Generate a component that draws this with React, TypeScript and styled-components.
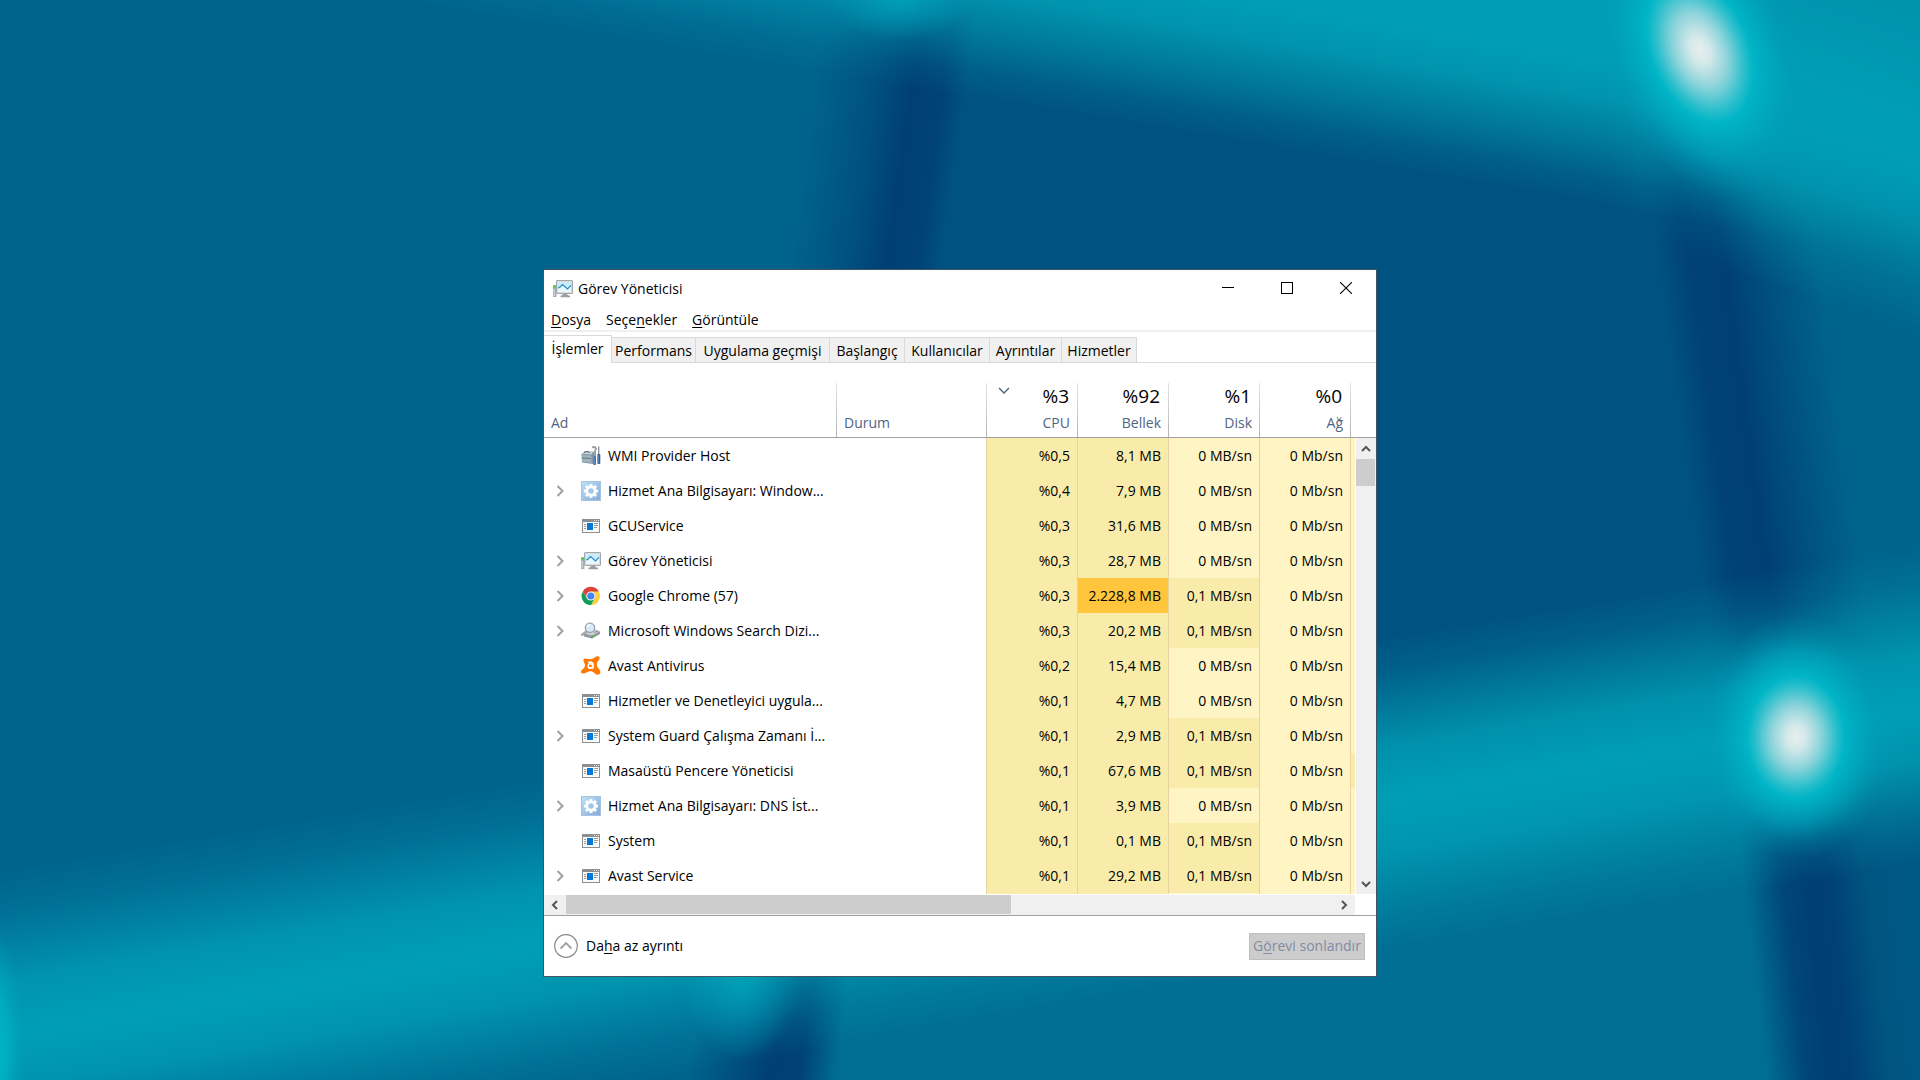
import React from "react";
import styled, { createGlobalStyle } from "styled-components";

const GlobalStyle = createGlobalStyle`
  *, *::before, *::after { box-sizing: border-box; }
  body {
    margin: 0;
    background: #00638e;
    font-family: "Open Sans", "Noto Sans", sans-serif;
    font-size: 14px;
    line-height: 20px;
    color: #000;
  }
  button { font: inherit; color: inherit; border: 0; background: none; padding: 0; margin: 0; }
  svg { display: block; flex: none; }
`;

const Desktop = styled.div`
  display: grid;
  min-height: 100vh;
  overflow: hidden;
`;

const Wallpaper = styled.svg`
  grid-area: 1 / 1;
  width: 100%;
  height: 100%;
`;

const WindowSlot = styled.main`
  grid-area: 1 / 1;
  display: flex;
  justify-content: center;
  align-items: flex-start;
  padding: 269px 16px 32px;
`;

const Window = styled.section`
  width: 834px;
  max-width: 100%;
  background: #fff;
  border: 1px solid #42545e;
`;

const TitleBar = styled.header`
  display: flex;
  align-items: center;
  height: 38px;
  padding: 0 1px 0 9px;
`;

const Title = styled.h1`
  flex: 1;
  margin: 0 0 0 5px;
  font-size: 14px;
  line-height: 20px;
  font-weight: 400;
`;

const CaptionButton = styled.button`
  display: flex;
  align-items: center;
  justify-content: center;
  width: 59px;
  height: 36px;
  align-self: flex-start;
`;

const MenuBar = styled.nav`
  display: flex;
  gap: 15px;
  height: 24px;
  padding-left: 7px;
  border-bottom: 2px solid #f0f0f0;
`;

const MenuItem = styled.button`
  padding-top: 2px;
`;

const Key = styled.span`
  text-decoration: underline;
  text-underline-offset: 2px;
`;

const TabStrip = styled.div`
  display: flex;
  align-items: flex-end;
  height: 31px;
  border-bottom: 1px solid #d9d9d9;
`;

const Tab = styled.button<{ $width: number; $active?: boolean }>`
  width: ${(p) => p.$width}px;
  height: ${(p) => (p.$active ? 28 : 25)}px;
  margin-bottom: ${(p) => (p.$active ? -1 : 0)}px;
  padding: ${(p) => (p.$active ? "0 0 2px" : "2px 0 0")};
  border: solid #d9d9d9;
  border-width: 1px 1px 0 0;
  background: ${(p) => (p.$active ? "#fff" : "#f0f0f0")};
  white-space: nowrap;
`;

const Panel = styled.div`
  display: grid;
  grid-template-columns: minmax(0, 1fr) 21px;
  padding-top: 20px;
`;

const ProcessTable = styled.table`
  width: 100%;
  table-layout: fixed;
  border-collapse: separate;
  border-spacing: 0;
`;

const Col = styled.col<{ $width?: number }>`
  width: ${(p) => (p.$width ? `${p.$width}px` : "auto")};
`;

const HeadCell = styled.th<{ $line?: boolean }>`
  height: 55px;
  padding: 0;
  border-bottom: 1px solid #a0a0a0;
  background: ${(p) =>
    p.$line ? "linear-gradient(#e4e4e4, #b4b4b4) right / 1px 100% no-repeat" : "none"};
  font-weight: 400;
`;

const HeadButton = styled.button<{ $end?: boolean }>`
  display: flex;
  flex-direction: column;
  justify-content: flex-end;
  gap: 5px;
  width: 100%;
  height: 54px;
  padding: 0 8px 4px 7px;
  color: #4f6482;
  text-align: ${(p) => (p.$end ? "right" : "left")};
`;

const HeadTop = styled.span`
  display: flex;
  justify-content: space-between;
  width: 100%;
  padding: 0 1px 0 4px;
`;

const HeadLabel = styled.span`
  width: 100%;
`;

const Usage = styled.span`
  flex: 1;
  font-size: 19px;
  line-height: 24px;
  color: #000;
`;

const SortMark = styled.svg`
  margin-top: 3px;
`;

const Row = styled.tr`
  height: 35px;
`;

const NameCell = styled.th`
  padding: 0;
  font-weight: 400;
  text-align: left;
`;

const NameBody = styled.div`
  display: flex;
  align-items: center;
  height: 35px;
  padding-left: 10px;
`;

const Expander = styled.button`
  display: flex;
  align-items: center;
  justify-content: center;
  flex: none;
  width: 12px;
  height: 20px;
  margin-right: 15px;
`;

const ExpanderSpace = styled.span`
  flex: none;
  width: 27px;
`;

const NameText = styled.span`
  margin-left: 7px;
  white-space: nowrap;
`;

const StatusCell = styled.td`
  padding: 0;
  border-right: 1px solid #e8d3a0;
`;

const heat = ["#fff4c4", "#f9ecaa", "#ffc63d"];

const HeatCell = styled.td<{ $heat: number }>`
  padding: 0 7px 0 0;
  background: ${(p) => heat[p.$heat]};
  background-clip: padding-box;
  border-right: 1px solid #e8d3a0;
  text-align: right;
  white-space: nowrap;
`;

const EdgeCell = styled.td<{ $heat: number }>`
  padding: 0;
  background: ${(p) => heat[p.$heat]};
`;

const CutRow = styled.tr`
  height: 1px;
`;

const CutCell = styled.td`
  padding: 0;
`;

const SideColumn = styled.div`
  display: flex;
  flex-direction: column;
`;

const HeadFiller = styled.div`
  height: 55px;
  border-bottom: 1px solid #a0a0a0;
`;

const VerticalBar = styled.div`
  flex: 1;
  display: flex;
  flex-direction: column;
  margin-left: 1px;
  background: #f0f0f0;
`;

const ArrowButton = styled.button`
  display: flex;
  align-items: center;
  justify-content: center;
  flex: none;
  width: 19px;
  height: 21px;
`;

const VerticalTrack = styled.div`
  flex: 1;
`;

const VerticalThumb = styled.div`
  width: 19px;
  height: 27px;
  background: #cdcdcd;
`;

const HorizontalBar = styled.div`
  display: flex;
  align-items: flex-start;
  height: 20px;
  margin: 1px 21px 0 0;
  background: #f0f0f0;
`;

const HorizontalTrack = styled.div`
  flex: 1;
`;

const HorizontalThumb = styled.div`
  width: 58%;
  height: 19px;
  background: #cdcdcd;
`;

const SideArrow = styled(ArrowButton)`
  width: 22px;
  height: 19px;
`;

const Footer = styled.footer`
  display: flex;
  align-items: center;
  justify-content: space-between;
  height: 61px;
  padding: 0 11px 0 10px;
  border-top: 1px solid #a0a0a0;
`;

const DetailsButton = styled.button`
  display: flex;
  align-items: center;
  gap: 8px;
`;

const EndTask = styled.button`
  width: 116px;
  height: 27px;
  border: 1px solid #bfbfbf;
  background: #cccccc;
  color: #838ba3;
  white-space: nowrap;
`;

type IconKind = "tools" | "gear" | "app" | "monitor" | "chrome" | "search" | "avast";

function MonitorIcon() {
  return (
    <svg width="20" height="20" viewBox="0 0 20 20" aria-hidden="true">
      <rect x="0" y="6" width="3.4" height="12" fill="#a9adb0" />
      <rect x="0.6" y="6.6" width="2.2" height="2.6" fill="#4fd13b" />
      <rect x="0.6" y="10" width="1.2" height="7" fill="#d4d6d8" />
      <path d="M10 15h4l1 1.500h2V18.300H7.500V16.500H9z" fill="#9a9ea1" />
      <rect x="3.500" y="1.500" width="16" height="13" rx="0.5" fill="#d9dbdc" stroke="#a4a7a9" />
      <rect x="5" y="3" width="13" height="10" fill="#c8ecfb" />
      <path d="M5 9l2-1.500 3-3.200 4.500 4.800L18 5.500V13H5z" fill="#e8f8fe" />
      <path d="M5 9l1.500-.5 3.200-3L14.500 10 18 6.300" fill="none" stroke="#1c86c4" strokeWidth="1.100" />
    </svg>
  );
}

function GearIcon() {
  return (
    <svg width="20" height="20" viewBox="0 0 20 20" aria-hidden="true">
      <defs>
        <linearGradient id="gearFill" x1="0" y1="0" x2="1" y2="1">
          <stop offset="0" stopColor="#b9e2f6" />
          <stop offset="1" stopColor="#86a9dc" />
        </linearGradient>
      </defs>
      <rect x="0.5" y="0.5" width="19" height="19" fill="url(#gearFill)" stroke="#a9c3dc" />
      <g fill="#fff">
        {[0, 45, 90, 135].map((a) => (
          <rect key={a} x="8.500" y="2.900" width="3" height="14.200" rx="0.6" transform={`rotate(${a} 10 10)`} />
        ))}
        <circle cx="10" cy="10" r="5.400" />
      </g>
      <circle cx="10" cy="10" r="2.800" fill="#a2c6ea" />
    </svg>
  );
}

function AppIcon() {
  return (
    <svg width="20" height="20" viewBox="0 0 20 20" aria-hidden="true">
      <rect x="1.500" y="3.500" width="17" height="13" fill="#fafafa" stroke="#8c9093" />
      <rect x="1" y="3" width="18" height="3" fill="#8c9093" />
      <path d="M13 4.500h1M15 4.500h1M17 4.500h1" stroke="#e8e8e8" />
      <rect x="6" y="7" width="6" height="7" fill="#0078d7" />
      <path d="M3 8.500h2M3 10.500h2M3 12.500h2M13 7.500h4M13 9.500h4M13 11.500h3" stroke="#9a9a9a" />
    </svg>
  );
}

function ChromeIcon() {
  return (
    <svg width="20" height="20" viewBox="0 0 20 20" aria-hidden="true">
      <circle cx="9.800" cy="10" r="9.200" fill="#fff" />
      <path d="M9.800 10L1.830 5.400A9.200 9.200 0 0 1 17.770 5.400z" fill="#db4437" />
      <path d="M9.800 5.400H17.770A9.200 9.200 0 0 1 9.800 19.200L13.780 12.300z" fill="#ffcd40" />
      <path d="M5.820 12.300L1.830 5.400A9.200 9.200 0 0 0 9.800 19.200L13.780 12.300z" fill="#0f9d58" />
      <path d="M1.830 5.400L5.820 12.300 9.800 5.400z" fill="#db4437" />
      <circle cx="9.800" cy="10" r="4.600" fill="#f4f4f4" />
      <circle cx="9.800" cy="10" r="3.600" fill="#4285f4" />
    </svg>
  );
}

function SearchIcon() {
  return (
    <svg width="20" height="20" viewBox="0 0 20 20" aria-hidden="true">
      <path d="M3 13l10-5 6 2.500v2.500l-8 4.500-8-2z" fill="#92979b" />
      <path d="M4 12.500l9-4.500 5.500 2.500-8 4.300z" fill="#cfd2d4" />
      <path d="M13 11.500l4-1.500" stroke="#8d9194" strokeWidth="1.200" />
      <rect x="10" y="14.500" width="2" height="2" fill="#44b549" />
      <path d="M1.300 13.800l4.500-3.500" stroke="#a3a8ac" strokeWidth="2.600" strokeLinecap="round" />
      <circle cx="9" cy="6.800" r="4.700" fill="#d7e9f8" stroke="#9aa3ad" strokeWidth="1.300" />
      <path d="M6.500 5.800a3 3 0 0 1 3-2.200" fill="none" stroke="#fff" strokeWidth="1.300" />
    </svg>
  );
}

function AvastIcon() {
  return (
    <svg width="20" height="20" viewBox="0 0 20 20" aria-hidden="true">
      <path
        d="M2.600 3.600C3.400 2 5.200 2.700 7 3c2.300.3 4.500.2 6-.9C14.400.9 15.600-.1 17.300.4c1.600.6 1.700 2.400.7 3.700-1.100 1.400-2.200 2.400-2.200 4.200 0 2 .7 3 2 4.500 1.500 1.600 2.100 3.600 1 4.900-1.200 1.300-3.200 1.200-4.600 0C12.600 16.300 11.600 15 9.200 15.200c-2 .1-2.900.8-4.200 1.600-1.700.9-4 1-4.800-.3-.7-1.300.2-2.400 1.500-3.300C3.300 12 4 10.800 4 8.800 4 6.900 1.800 5.300 2.600 3.600z"
        fill="#ff7800"
      />
      <circle cx="9.400" cy="9.900" r="2.200" fill="none" stroke="#fff" strokeWidth="1.600" />
      <path d="M7.300 6.700c1.800-1 4.700-.8 4.700 1.500v4.600" fill="none" stroke="#fff" strokeWidth="1.600" />
    </svg>
  );
}

function ToolsIcon() {
  return (
    <svg width="20" height="20" viewBox="0 0 20 20" aria-hidden="true">
      <path d="M0.500 8l3-2.500h9l1.500 2v9L12 18l-11-1.500z" fill="#8397a6" />
      <path d="M0.500 8l3-2.500h9L10.500 8.500z" fill="#c3d0d8" />
      <path d="M0.700 9l9.800.5v7.300L1 15.800z" fill="#9fb2be" />
      <path d="M3.500 7c0-2 4.500-2 4.500 0" fill="none" stroke="#5c6b77" strokeWidth="1.100" />
      <path d="M1 12l9 .500" stroke="#627683" strokeWidth="1" />
      <path d="M11 1.500l2.500-.8 1.500 2-1 2.500.2 5" fill="none" stroke="#9ba1a5" strokeWidth="1.900" />
      <path d="M17.700 0.500v8" stroke="#888e94" strokeWidth="1.300" />
      <rect x="12.300" y="10" width="2.700" height="9" rx="1" fill="#3e6ca6" />
      <rect x="16.300" y="8" width="3" height="10" rx="1" fill="#355f98" />
      <path d="M17.200 9v8M13.200 11v7" stroke="#80a9d8" strokeWidth="0.700" />
    </svg>
  );
}

const icons: Record<IconKind, () => React.JSX.Element> = {
  tools: ToolsIcon,
  gear: GearIcon,
  app: AppIcon,
  monitor: MonitorIcon,
  chrome: ChromeIcon,
  search: SearchIcon,
  avast: AvastIcon,
};

const arrowPaths = {
  up: "M2 8l4-4 4 4",
  down: "M2 4l4 4 4-4",
  left: "M8 2L4 6l4 4",
  right: "M4 2l4 4-4 4",
};

function Arrow({ dir }: { dir: keyof typeof arrowPaths }) {
  return (
    <svg width="12" height="12" viewBox="0 0 12 12" aria-hidden="true">
      <path d={arrowPaths[dir]} fill="none" stroke="#555" strokeWidth="2" />
    </svg>
  );
}

function Background() {
  return (
    <Wallpaper viewBox="0 0 1920 1080" preserveAspectRatio="xMidYMid slice" aria-hidden="true">
      <defs>
        <linearGradient id="poleTop" gradientUnits="userSpaceOnUse" x1="816" y1="70" x2="966" y2="91">
          <stop offset="0" stopColor="#00638e" />
          <stop offset="0.4" stopColor="#005080" />
          <stop offset="0.64" stopColor="#003f75" />
          <stop offset="0.85" stopColor="#004377" />
          <stop offset="1" stopColor="#005281" />
        </linearGradient>
        <linearGradient id="poleBottom" gradientUnits="userSpaceOnUse" x1="690" y1="1060" x2="836" y2="1080">
          <stop offset="0" stopColor="#00638e" />
          <stop offset="0.55" stopColor="#003f75" />
          <stop offset="0.75" stopColor="#004177" />
          <stop offset="1" stopColor="#006d94" />
        </linearGradient>
        <linearGradient id="poleRight" gradientUnits="userSpaceOnUse" x1="1652" y1="227" x2="1810" y2="205">
          <stop offset="0" stopColor="#005281" />
          <stop offset="0.2" stopColor="#004277" />
          <stop offset="0.42" stopColor="#003f75" />
          <stop offset="0.68" stopColor="#00507f" />
          <stop offset="1" stopColor="#00638c" />
        </linearGradient>
        <linearGradient id="poleRightLow" gradientUnits="userSpaceOnUse" x1="1746" y1="900" x2="1896" y2="882">
          <stop offset="0" stopColor="#006d94" />
          <stop offset="0.25" stopColor="#00467a" />
          <stop offset="0.4" stopColor="#003f75" />
          <stop offset="0.55" stopColor="#004075" />
          <stop offset="0.8" stopColor="#005480" />
          <stop offset="1" stopColor="#005884" />
        </linearGradient>
        <linearGradient id="beamTop" gradientUnits="userSpaceOnUse" x1="1377" y1="18" x2="1352" y2="164">
          <stop offset="0" stopColor="#009eb6" />
          <stop offset="0.28" stopColor="#009eb6" stopOpacity="0.86" />
          <stop offset="0.58" stopColor="#009eb6" stopOpacity="0.48" />
          <stop offset="0.82" stopColor="#009eb6" stopOpacity="0.15" />
          <stop offset="1" stopColor="#009eb6" stopOpacity="0" />
        </linearGradient>
        <linearGradient id="beamTopRight" gradientUnits="userSpaceOnUse" x1="1870" y1="0" x2="1770" y2="286">
          <stop offset="0" stopColor="#0093ae" />
          <stop offset="0.35" stopColor="#009eb6" />
          <stop offset="0.65" stopColor="#009eb6" stopOpacity="0.66" />
          <stop offset="0.85" stopColor="#009eb6" stopOpacity="0.24" />
          <stop offset="1" stopColor="#009eb6" stopOpacity="0" />
        </linearGradient>
        <linearGradient id="fadeIn" gradientUnits="userSpaceOnUse" x1="1600" y1="0" x2="1760" y2="0">
          <stop offset="0" stopColor="#000" />
          <stop offset="1" stopColor="#fff" />
        </linearGradient>
        <mask id="rightOnly">
          <rect x="1600" y="0" width="320" height="500" fill="url(#fadeIn)" />
        </mask>
        <linearGradient id="beamLow" gradientUnits="userSpaceOnUse" x1="1377" y1="636" x2="1430" y2="947">
          <stop offset="0" stopColor="#009eb6" stopOpacity="0" />
          <stop offset="0.12" stopColor="#009eb6" stopOpacity="0.2" />
          <stop offset="0.35" stopColor="#009eb6" stopOpacity="0.82" />
          <stop offset="0.52" stopColor="#009eb6" />
          <stop offset="0.68" stopColor="#009eb6" stopOpacity="0.82" />
          <stop offset="0.88" stopColor="#009eb6" stopOpacity="0.25" />
          <stop offset="1" stopColor="#009eb6" stopOpacity="0" />
        </linearGradient>
        <radialGradient id="lamp">
          <stop offset="0" stopColor="#e8eeee" />
          <stop offset="0.1" stopColor="#d3e8ea" />
          <stop offset="0.26" stopColor="#8ad3da" />
          <stop offset="0.41" stopColor="#2dbfcc" />
          <stop offset="0.5" stopColor="#00b5c6" />
          <stop offset="0.7" stopColor="#00aabe" stopOpacity="0.6" />
          <stop offset="0.85" stopColor="#00a2b9" stopOpacity="0.2" />
          <stop offset="1" stopColor="#009eb6" stopOpacity="0" />
        </radialGradient>
        <radialGradient id="glow">
          <stop offset="0" stopColor="#00a3b9" />
          <stop offset="0.5" stopColor="#00a0b8" stopOpacity="0.5" />
          <stop offset="1" stopColor="#009eb6" stopOpacity="0" />
        </radialGradient>
        <radialGradient id="edgeGlow">
          <stop offset="0" stopColor="#00bccb" />
          <stop offset="0.5" stopColor="#00b2c4" stopOpacity="0.7" />
          <stop offset="1" stopColor="#009eb6" stopOpacity="0" />
        </radialGradient>
      </defs>
      <rect width="1920" height="1080" fill="url(#poleTop)" />
      <path d="M1500 0H1920V700H1500z" fill="url(#poleRight)" />
      <path d="M600 950L1920 725V1080H600z" fill="url(#poleBottom)" />
      <path d="M1700 763L1920 725V1080H1700z" fill="url(#poleRightLow)" />
      <rect width="1920" height="400" fill="url(#beamTop)" />
      <rect x="1600" width="320" height="500" fill="url(#beamTopRight)" mask="url(#rightOnly)" />
      <rect y="400" width="1920" height="680" fill="url(#beamLow)" />
      <ellipse cx="900" cy="-6" rx="76" ry="46" fill="url(#glow)" />
      <ellipse cx="742" cy="970" rx="60" ry="90" fill="url(#glow)" />
      <ellipse cx="-8" cy="1055" rx="34" ry="130" fill="url(#edgeGlow)" />
      <ellipse cx="1700" cy="50" rx="98" ry="152" fill="url(#lamp)" transform="rotate(-22 1700 50)" />
      <ellipse cx="1796" cy="737" rx="98" ry="122" fill="url(#lamp)" />
    </Wallpaper>
  );
}

const tabs = [
  { label: "İşlemler", width: 68 },
  { label: "Performans", width: 84 },
  { label: "Uygulama geçmişi", width: 134 },
  { label: "Başlangıç", width: 75 },
  { label: "Kullanıcılar", width: 85 },
  { label: "Ayrıntılar", width: 72 },
  { label: "Hizmetler", width: 75 },
];

const meters = [
  { usage: "%3", label: "CPU", sorted: true },
  { usage: "%92", label: "Bellek" },
  { usage: "%1", label: "Disk" },
  { usage: "%0", label: "Ağ" },
];

interface Process {
  name: string;
  icon: IconKind;
  group?: boolean;
  cpu: string;
  memory: string;
  disk: string;
  hot?: boolean;
  edge?: boolean;
}

const processes: Process[] = [
  { name: "WMI Provider Host", icon: "tools", cpu: "%0,5", memory: "8,1 MB", disk: "0 MB/sn" },
  { name: "Hizmet Ana Bilgisayarı: Window...", icon: "gear", group: true, cpu: "%0,4", memory: "7,9 MB", disk: "0 MB/sn" },
  { name: "GCUService", icon: "app", cpu: "%0,3", memory: "31,6 MB", disk: "0 MB/sn" },
  { name: "Görev Yöneticisi", icon: "monitor", group: true, cpu: "%0,3", memory: "28,7 MB", disk: "0 MB/sn" },
  { name: "Google Chrome (57)", icon: "chrome", group: true, cpu: "%0,3", memory: "2.228,8 MB", disk: "0,1 MB/sn", hot: true },
  { name: "Microsoft Windows Search Dizi...", icon: "search", group: true, cpu: "%0,3", memory: "20,2 MB", disk: "0,1 MB/sn" },
  { name: "Avast Antivirus", icon: "avast", cpu: "%0,2", memory: "15,4 MB", disk: "0 MB/sn" },
  { name: "Hizmetler ve Denetleyici uygula...", icon: "app", cpu: "%0,1", memory: "4,7 MB", disk: "0 MB/sn" },
  { name: "System Guard Çalışma Zamanı İ...", icon: "app", group: true, cpu: "%0,1", memory: "2,9 MB", disk: "0,1 MB/sn" },
  { name: "Masaüstü Pencere Yöneticisi", icon: "app", cpu: "%0,1", memory: "67,6 MB", disk: "0,1 MB/sn", edge: true },
  { name: "Hizmet Ana Bilgisayarı: DNS İst...", icon: "gear", group: true, cpu: "%0,1", memory: "3,9 MB", disk: "0 MB/sn" },
  { name: "System", icon: "app", cpu: "%0,1", memory: "0,1 MB", disk: "0,1 MB/sn" },
  { name: "Avast Service", icon: "app", group: true, cpu: "%0,1", memory: "29,2 MB", disk: "0,1 MB/sn" },
];

function ProcessRow({ process: p }: { process: Process }) {
  const Icon = icons[p.icon];
  return (
    <Row>
      <NameCell scope="row">
        <NameBody>
          {p.group ? (
            <Expander aria-label={`${p.name} genişlet`}>
              <svg width="8" height="12" viewBox="0 0 8 12" aria-hidden="true">
                <path d="M1.500 1l5 5-5 5" fill="none" stroke="#a0a0a0" strokeWidth="2" />
              </svg>
            </Expander>
          ) : (
            <ExpanderSpace />
          )}
          <Icon />
          <NameText>{p.name}</NameText>
        </NameBody>
      </NameCell>
      <StatusCell />
      <HeatCell $heat={1}>{p.cpu}</HeatCell>
      <HeatCell $heat={p.hot ? 2 : 1}>{p.memory}</HeatCell>
      <HeatCell $heat={p.disk.startsWith("0,") ? 1 : 0}>{p.disk}</HeatCell>
      <HeatCell $heat={0}>0 Mb/sn</HeatCell>
      <EdgeCell $heat={p.edge ? 1 : 0} />
    </Row>
  );
}

export default function App() {
  return (
    <Desktop>
      <GlobalStyle />
      <Background />
      <WindowSlot>
        <Window aria-label="Görev Yöneticisi">
          <TitleBar>
            <MonitorIcon />
            <Title>Görev Yöneticisi</Title>
            <CaptionButton aria-label="Simge durumuna küçült">
              <svg width="12" height="12" viewBox="0 0 12 12">
                <path d="M0 5.500h12" stroke="#000" />
              </svg>
            </CaptionButton>
            <CaptionButton aria-label="Ekranı kapla">
              <svg width="12" height="12" viewBox="0 0 12 12">
                <rect x="0.500" y="0.500" width="11" height="11" fill="none" stroke="#000" />
              </svg>
            </CaptionButton>
            <CaptionButton aria-label="Kapat">
              <svg width="12" height="12" viewBox="0 0 12 12">
                <path d="M0 0l12 12M12 0L0 12" stroke="#000" strokeWidth="1.100" />
              </svg>
            </CaptionButton>
          </TitleBar>
          <MenuBar>
            <MenuItem><Key>D</Key>osya</MenuItem>
            <MenuItem>Seçe<Key>n</Key>ekler</MenuItem>
            <MenuItem><Key>G</Key>örüntüle</MenuItem>
          </MenuBar>
          <TabStrip role="tablist">
            {tabs.map((t, i) => (
              <Tab key={t.label} role="tab" aria-selected={i === 0} $active={i === 0} $width={t.width}>
                {t.label}
              </Tab>
            ))}
          </TabStrip>
          <Panel>
            <ProcessTable>
              <colgroup>
                <Col />
                <Col $width={150} />
                <Col $width={91} />
                <Col $width={91} />
                <Col $width={91} />
                <Col $width={91} />
                <Col $width={4} />
              </colgroup>
              <thead>
                <tr>
                  <HeadCell $line scope="col"><HeadButton>Ad</HeadButton></HeadCell>
                  <HeadCell $line scope="col"><HeadButton>Durum</HeadButton></HeadCell>
                  {meters.map((m) => (
                    <HeadCell $line scope="col" key={m.label}>
                      <HeadButton $end>
                        <HeadTop>
                          {m.sorted && (
                            <SortMark width="12" height="8" viewBox="0 0 12 8" aria-hidden="true">
                              <path d="M1 1l5 5 5-5" fill="none" stroke="#4f6482" strokeWidth="1.400" />
                            </SortMark>
                          )}
                          <Usage>{m.usage}</Usage>
                        </HeadTop>
                        <HeadLabel>{m.label}</HeadLabel>
                      </HeadButton>
                    </HeadCell>
                  ))}
                  <HeadCell as="td" />
                </tr>
              </thead>
              <tbody>
                {processes.map((p) => (
                  <ProcessRow key={p.name} process={p} />
                ))}
                <CutRow aria-hidden="true">
                  <CutCell />
                  <StatusCell />
                  <HeatCell $heat={1} />
                  <HeatCell $heat={1} />
                  <HeatCell $heat={0} />
                  <HeatCell $heat={0} />
                  <EdgeCell $heat={0} />
                </CutRow>
              </tbody>
            </ProcessTable>
            <SideColumn>
              <HeadFiller />
              <VerticalBar>
                <ArrowButton aria-label="Yukarı kaydır"><Arrow dir="up" /></ArrowButton>
                <VerticalTrack><VerticalThumb /></VerticalTrack>
                <ArrowButton aria-label="Aşağı kaydır"><Arrow dir="down" /></ArrowButton>
              </VerticalBar>
            </SideColumn>
          </Panel>
          <HorizontalBar>
            <SideArrow aria-label="Sola kaydır"><Arrow dir="left" /></SideArrow>
            <HorizontalTrack><HorizontalThumb /></HorizontalTrack>
            <SideArrow aria-label="Sağa kaydır"><Arrow dir="right" /></SideArrow>
          </HorizontalBar>
          <Footer>
            <DetailsButton>
              <svg width="24" height="24" viewBox="0 0 24 24" aria-hidden="true">
                <circle cx="12" cy="12" r="11.300" fill="none" stroke="#8a8a8a" strokeWidth="1.200" />
                <path d="M6.500 14.500l5.500-5.500 5.500 5.500" fill="none" stroke="#a0a0a0" strokeWidth="1.800" />
              </svg>
              <span>Da<Key>h</Key>a az ayrıntı</span>
            </DetailsButton>
            <EndTask disabled>G<Key>ö</Key>revi sonlandır</EndTask>
          </Footer>
        </Window>
      </WindowSlot>
    </Desktop>
  );
}
